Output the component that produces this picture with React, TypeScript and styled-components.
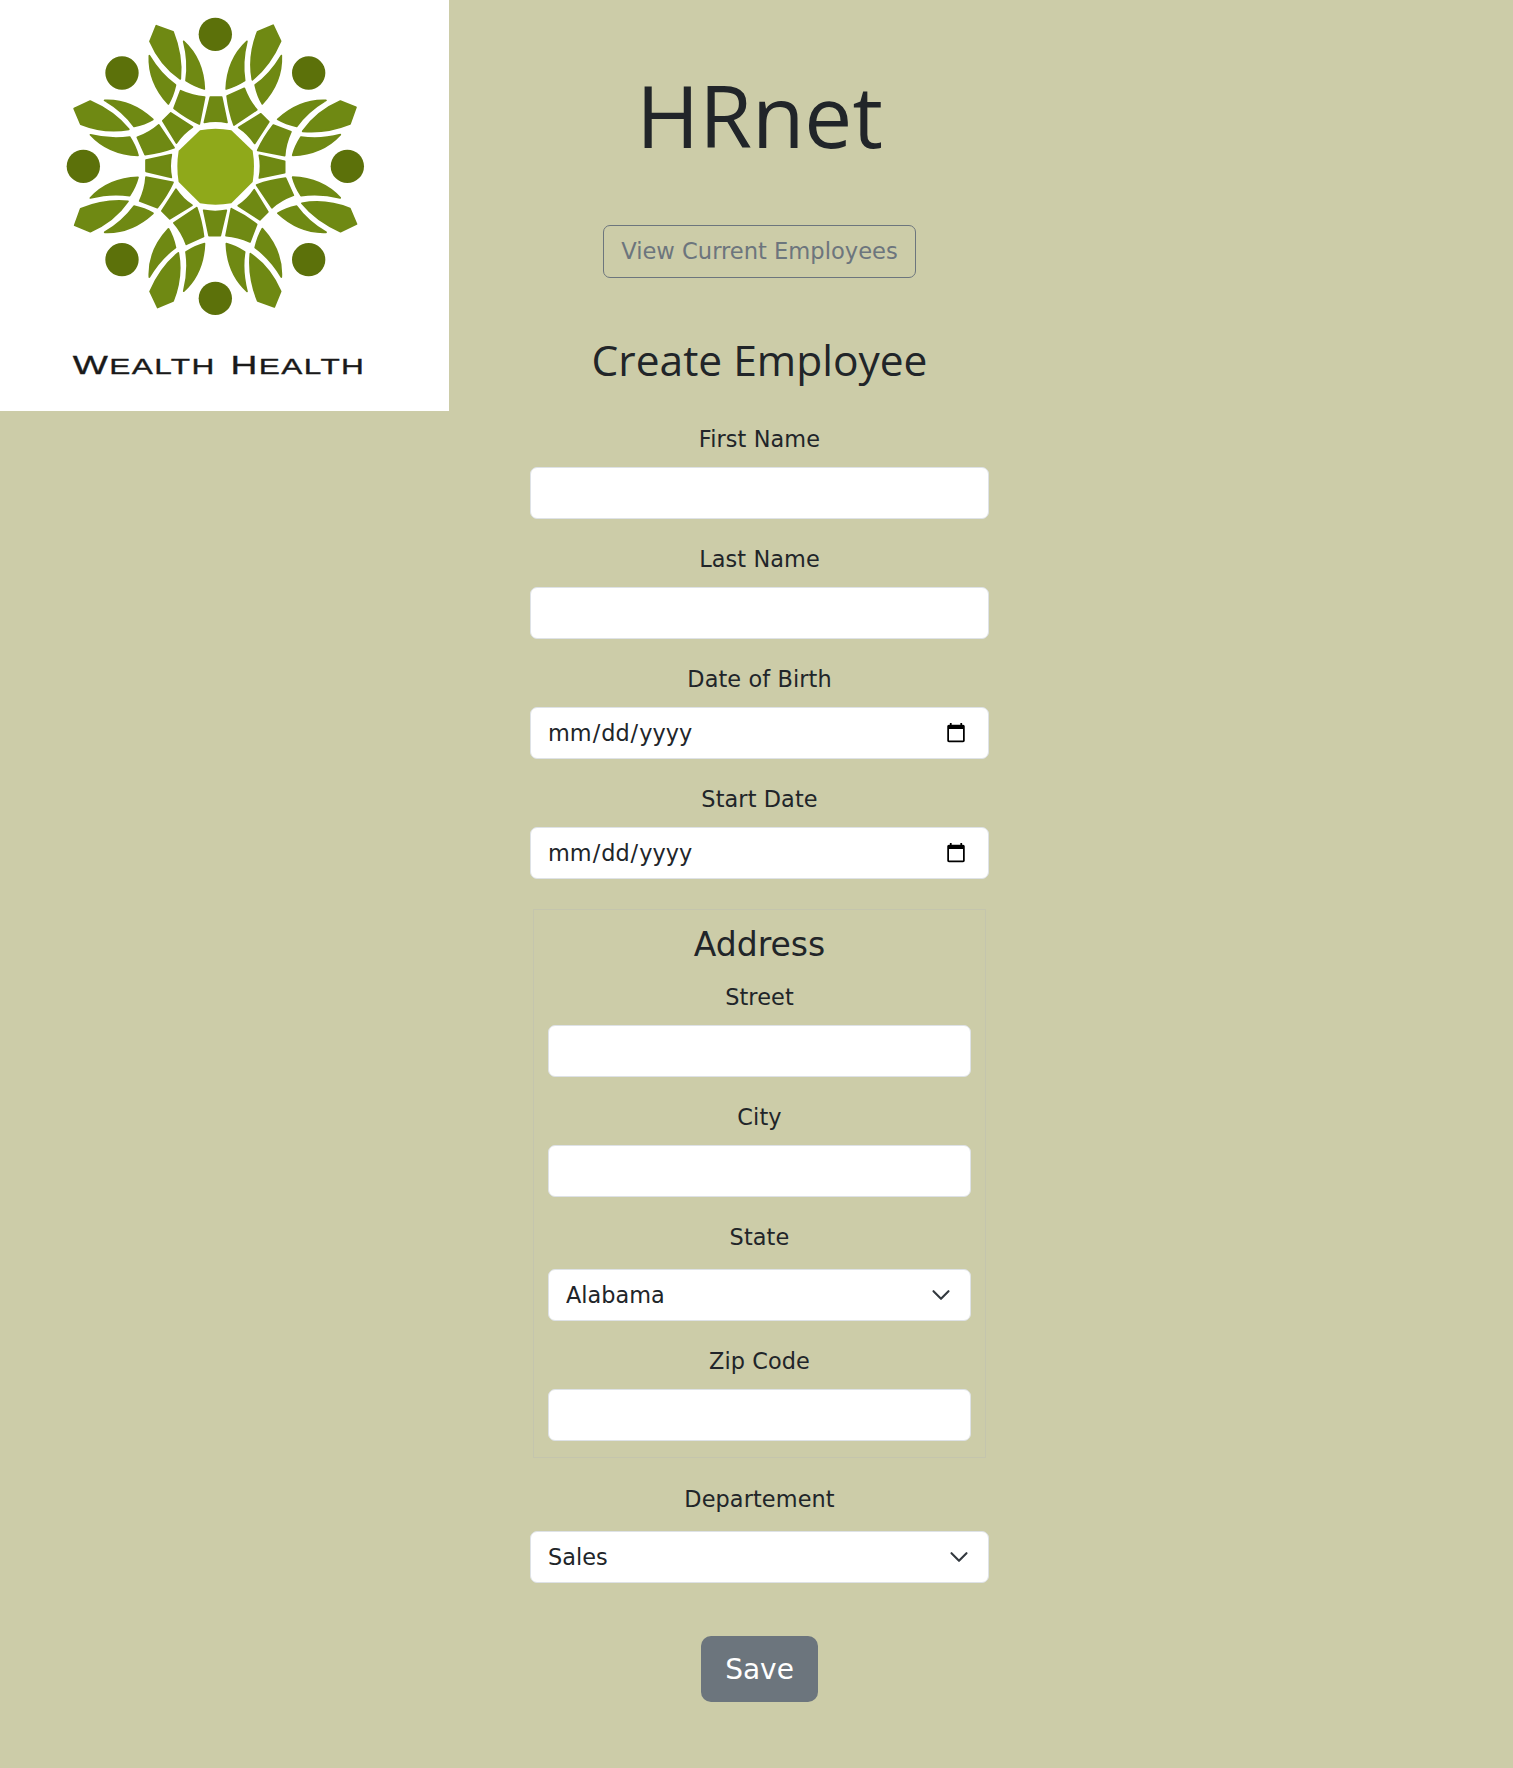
import React from "react";
import styled, { createGlobalStyle } from "styled-components";

const GlobalStyle = createGlobalStyle`
  html, body { margin: 0; padding: 0; background: #cccca8; }
  body { font-family: "DejaVu Sans", sans-serif; color: #212529; min-height: 1768px; }
  * { box-sizing: border-box; }
`;

const Page = styled.div`
  display: grid;
  grid-template-columns: 449px 621px 1fr;
  align-items: start;
`;

const LogoBox = styled.div`
  width: 449px;
  height: 411px;
  background: #fff;
`;

const LogoSvg = styled.svg`
  display: block;
  width: 449px;
  height: 411px;
`;

const Main = styled.main`
  display: flex;
  flex-direction: column;
  align-items: center;
`;

const Title = styled.h1`
  margin: 63px 0 0;
  font-family: "Open Sans", sans-serif;
  font-weight: 400;
  font-size: 85.5px;
  line-height: 104px;
`;

const LinkButton = styled.a`
  display: block;
  margin-top: 58px;
  width: 313px;
  height: 53px;
  border: 1px solid #6c757d;
  border-radius: 7px;
  color: #6c757d;
  font-size: 22.6px;
  line-height: 50px;
  text-align: center;
  text-decoration: none;
`;

const Heading = styled.h2`
  margin: 53px 0 0;
  font-family: "Open Sans", sans-serif;
  font-weight: 400;
  font-size: 42.5px;
  line-height: 58px;
`;

const Form = styled.form`
  width: 459px;
  margin-top: 33px;
`;

const Field = styled.div`
  display: flex;
  flex-direction: column;
  margin-bottom: 23px;
`;

const Label = styled.label<{ $tall?: boolean }>`
  display: block;
  text-align: center;
  font-size: 22.4px;
  letter-spacing: 0.1px;
  line-height: 34px;
  margin-bottom: ${(p) => (p.$tall ? 15 : 11)}px;
`;

const Input = styled.input`
  display: block;
  width: 100%;
  height: 52px;
  padding: 0 19px 0 16px;
  border: 1px solid #dee2e6;
  border-radius: 7px;
  background: #fff;
  color: #212529;
  font-family: "DejaVu Sans", sans-serif;
  font-size: 22.4px;
  outline: none;
`;

const Select = styled.select`
  display: block;
  width: 100%;
  height: 52px;
  padding: 0 17px;
  border: 1px solid #dee2e6;
  border-radius: 7px;
  color: #212529;
  font-family: "DejaVu Sans", sans-serif;
  font-size: 22.4px;
  appearance: none;
  background-color: #fff;
  background-image: url("data:image/svg+xml,%3csvg xmlns='http://www.w3.org/2000/svg' viewBox='0 0 16 16'%3e%3cpath fill='none' stroke='%23343a40' stroke-linecap='round' stroke-linejoin='round' stroke-width='1.7' d='m2 5 6 6 6-6'/%3e%3c/svg%3e");
  background-repeat: no-repeat;
  background-position: right 19px center;
  background-size: 20px 20px;
`;

const AddressSet = styled.fieldset`
  width: 453px;
  margin: 30px auto 0;
  padding: 0 14px 16px;
  border: 1px solid #c4c5ad;

  & > div:last-child {
    margin-bottom: 0;
  }
`;

const AddressTitle = styled.h3`
  margin: 16px 0 16px;
  text-align: center;
  font-weight: 400;
  font-size: 33px;
  line-height: 38px;
`;

const Departement = styled(Field)`
  margin-top: 24px;
  margin-bottom: 0;
`;

const SaveRow = styled.div`
  display: flex;
  justify-content: center;
  margin-top: 53px;
`;

const SaveButton = styled.button`
  width: 117px;
  height: 66px;
  border: 0;
  border-radius: 10px;
  background: #6c757d;
  color: #fff;
  font-family: "DejaVu Sans", sans-serif;
  font-size: 28px;
`;

const C = "646 499";
const angles = [0, 45, 90, 135, 180, 225, 270, 315];

function Logo() {
  return (
    <LogoSvg viewBox="0 0 1347 1233" aria-label="Wealth Health logo">
      {angles.map((a) => (
        <g key={a} transform={`rotate(${a} ${C}) translate(1 2)`}>
          <circle cx="645" cy="101" r="50" fill="#5c710a" />
          <g fill="#6f8913" stroke="#6f8913" strokeWidth="5" strokeLinejoin="round">
            <path d="M468 75 L518 93 Q547 166 540 235 Q480 194 449 122Z" />
            <path d="M550 122 Q609 176 612 265 Q585 258 557 240 Q566 184 550 122Z" />
            <path d="M447 165 Q443.5 244.5 504 310 Q518 286 525.5 253 Q480 220 447 165Z" />
            <path d="M541 270 Q578 287 613 289 L597 370 Q558 352 521 323Z" />
            <path d="M630 289 L664 289 L680 365 Q645 358 612 365Z" />
          </g>
        </g>
      ))}
      <path
        fill="#8fa91a"
        d="M600 391 Q646 382 694 391 L758 452 Q766 499 758 546 L694 610 Q646 618 600 610 L536 546 Q528 499 536 452Z"
      />
      <text
        x="218"
        y="1122"
        textLength="878"
        lengthAdjust="spacingAndGlyphs"
        fontFamily="Liberation Sans, sans-serif"
        letterSpacing="3"
        fill="#1a1a1a"
        stroke="#1a1a1a"
        strokeWidth="1"
      >
        <tspan fontSize="80">W</tspan>
        <tspan fontSize="68">EALTH </tspan>
        <tspan fontSize="80" dx="10">H</tspan>
        <tspan fontSize="68">EALTH</tspan>
      </text>
    </LogoSvg>
  );
}

export default function App() {
  return (
    <>
      <GlobalStyle />
      <Page>
        <LogoBox>
          <Logo />
        </LogoBox>
        <Main>
          <Title>HRnet</Title>
          <LinkButton href="#">View Current Employees</LinkButton>
          <Heading>Create Employee</Heading>
          <Form>
            <Field>
              <Label>First Name</Label>
              <Input type="text" />
            </Field>
            <Field>
              <Label>Last Name</Label>
              <Input type="text" />
            </Field>
            <Field>
              <Label>Date of Birth</Label>
              <Input type="date" />
            </Field>
            <Field>
              <Label>Start Date</Label>
              <Input type="date" />
            </Field>
            <AddressSet>
              <AddressTitle>Address</AddressTitle>
              <Field>
                <Label>Street</Label>
                <Input type="text" />
              </Field>
              <Field>
                <Label>City</Label>
                <Input type="text" />
              </Field>
              <Field>
                <Label $tall>State</Label>
                <Select defaultValue="Alabama">
                  <option>Alabama</option>
                  <option>Alaska</option>
                </Select>
              </Field>
              <Field>
                <Label>Zip Code</Label>
                <Input type="text" />
              </Field>
            </AddressSet>
            <Departement>
              <Label $tall>Departement</Label>
              <Select defaultValue="Sales">
                <option>Sales</option>
                <option>Marketing</option>
              </Select>
            </Departement>
            <SaveRow>
              <SaveButton type="button">Save</SaveButton>
            </SaveRow>
          </Form>
        </Main>
      </Page>
    </>
  );
}
